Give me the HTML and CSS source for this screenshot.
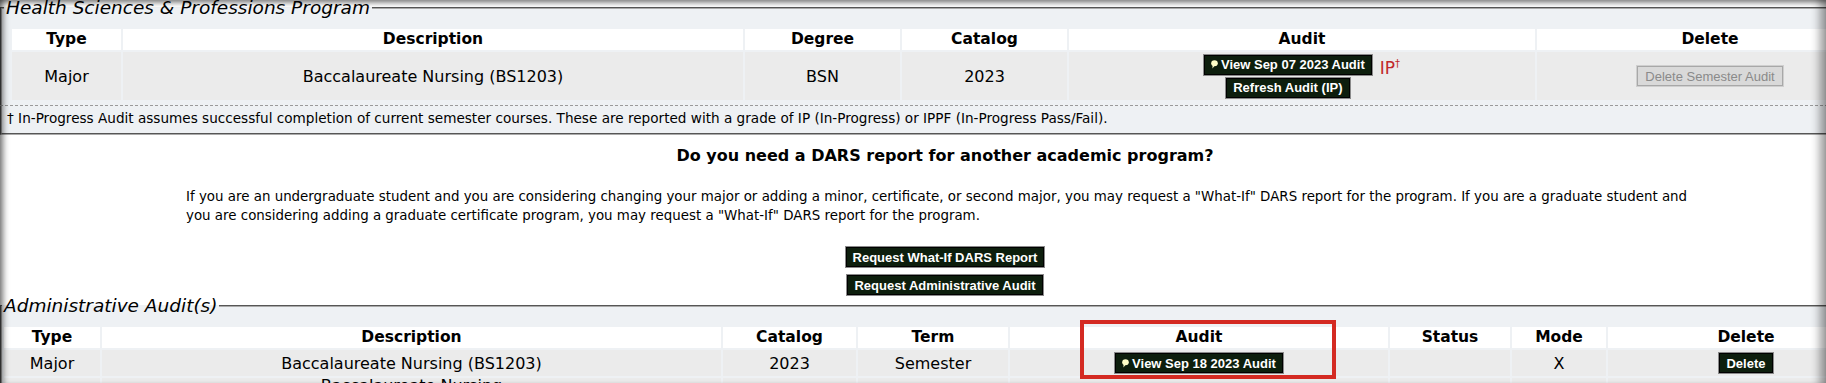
FILE: index.html
```html
<!DOCTYPE html>
<html lang="en">
<head>
    <meta charset="UTF-8">
    <title>Degree Audit</title>
    <link rel="stylesheet" href="styles.css">
</head>
<body>
    <div class="page">
        <fieldset class="group program">
            <legend>Health Sciences &amp; Professions Program</legend>
            <table class="grid grid-program">
                <colgroup>
                    <col class="c-type"><col class="c-desc"><col class="c-degree"><col class="c-catalog"><col class="c-audit"><col class="c-delete">
                </colgroup>
                <thead>
                    <tr><th>Type</th><th>Description</th><th>Degree</th><th>Catalog</th><th>Audit</th><th>Delete</th></tr>
                </thead>
                <tbody>
                    <tr>
                        <td>Major</td>
                        <td>Baccalaureate Nursing (BS1203)</td>
                        <td>BSN</td>
                        <td>2023</td>
                        <td>
                            <div class="audit-links">
                                <div class="audit-buttons">
                                    <button class="btn"><svg class="note" width="7" height="9" viewBox="0 0 7 9"><ellipse cx="3.5" cy="3.2" rx="3.3" ry="3" fill="#ffffc8"/><path d="M1.6 5.2 L1.4 8.6 L3.6 5.8 Z" fill="#ffffc8"/></svg>View Sep 07 2023 Audit</button>
                                    <button class="btn">Refresh Audit (IP)</button>
                                </div>
                                <span class="ip">IP<sup>&dagger;</sup></span>
                            </div>
                        </td>
                        <td><button class="btn btn-disabled" disabled>Delete Semester Audit</button></td>
                    </tr>
                </tbody>
            </table>
            <p class="footnote">&dagger; In-Progress Audit assumes successful completion of current semester courses. These are reported with a grade of IP (In-Progress) or IPPF (In-Progress Pass/Fail).</p>
        </fieldset>

        <div class="whatif">
            <h3>Do you need a DARS report for another academic program?</h3>
            <p>If you are an undergraduate student and you are considering changing your major or adding a minor, certificate, or second major, you may request a "What-If" DARS report for the program. If you are a graduate student and you are considering adding a graduate certificate program, you may request a "What-If" DARS report for the program.</p>
            <div class="actions">
                <button class="btn">Request What-If DARS Report</button>
                <button class="btn">Request Administrative Audit</button>
            </div>
        </div>

        <fieldset class="group admin">
            <legend>Administrative Audit(s)</legend>
            <div class="table-wrap">
                <table class="grid grid-admin">
                    <colgroup>
                        <col class="a-type"><col class="a-desc"><col class="a-catalog"><col class="a-term"><col class="a-audit"><col class="a-status"><col class="a-mode"><col class="a-delete">
                    </colgroup>
                    <thead>
                        <tr><th>Type</th><th>Description</th><th>Catalog</th><th>Term</th><th>Audit</th><th>Status</th><th>Mode</th><th>Delete</th></tr>
                    </thead>
                    <tbody>
                        <tr>
                            <td>Major</td>
                            <td>Baccalaureate Nursing (BS1203)</td>
                            <td>2023</td>
                            <td>Semester</td>
                            <td><button class="btn"><svg class="note" width="7" height="9" viewBox="0 0 7 9"><ellipse cx="3.5" cy="3.2" rx="3.3" ry="3" fill="#ffffc8"/><path d="M1.6 5.2 L1.4 8.6 L3.6 5.8 Z" fill="#ffffc8"/></svg>View Sep 18 2023 Audit</button></td>
                            <td></td>
                            <td>X</td>
                            <td><button class="btn">Delete</button></td>
                        </tr>
                        <tr class="next">
                            <td>Major</td>
                            <td>Baccalaureate Nursing<br>(BS1203)</td>
                            <td>2023</td>
                            <td>Semester</td>
                            <td></td>
                            <td></td>
                            <td>X</td>
                            <td></td>
                        </tr>
                    </tbody>
                </table>
                <div class="highlight"></div>
            </div>
        </fieldset>
    </div>
    <div class="frame"></div>
</body>
</html>
```

FILE: styles.css
```css
html, body {
    margin: 0;
}
body {
    font-family: "DejaVu Sans", Verdana, sans-serif;
    color: #000;
    background: #fff;
    overflow: hidden;
}
.page {
    width: 1890px;
}
.group {
    margin: 0;
    border: 2px groove #aaa;
    background: #eef1f4;
    min-width: 0;
}
.group legend {
    font-style: italic;
    font-size: 18.5px;
    line-height: 22px;
    padding: 0 2px;
}
.program {
    margin-top: -3px;
    padding: 8px 8px 0 8px;
}
.program legend {
    margin-left: -6px;
}
.grid {
    table-layout: fixed;
    border-spacing: 2px;
}
.grid th {
    background: #fff;
    font-size: 15.5px;
    font-weight: bold;
    line-height: 17px;
    padding: 2px 4px;
}
.grid td {
    background: #ebebeb;
    text-align: center;
    font-size: 16px;
    padding: 0 4px;
}
.grid-program {
    width: 1875px;
}
.grid-program td {
    height: 48px;
}
.c-type { width: 109px; }
.c-desc { width: 620px; }
.c-degree { width: 155px; }
.c-catalog { width: 165px; }
.c-audit { width: 466px; }
.c-delete { width: 346px; }

.audit-links {
    display: flex;
    justify-content: center;
    align-items: flex-start;
    gap: 8px;
}
.audit-buttons {
    display: flex;
    flex-direction: column;
    align-items: center;
    gap: 3px;
}
.ip {
    color: #c0282a;
    font-size: 17px;
    line-height: 17px;
}
.ip sup {
    font-size: 10px;
    vertical-align: 7px;
}
.btn {
    font-family: "Liberation Sans", Arial, sans-serif;
    font-size: 13px;
    font-weight: bold;
    color: #fff;
    background: #0d1e0d;
    border: 1px solid #000;
    box-shadow: 0 0 0 1px #8a8a8a;
    height: 20px;
    line-height: 15px;
    padding: 0 6px;
    cursor: pointer;
    display: inline-flex;
    align-items: center;
    gap: 3px;
}
.note {
    display: block;
}
.btn-disabled {
    background: #d9d9d9;
    color: #8a8a8a;
    border: 1px solid #a8a8a8;
    box-shadow: 0 0 0 1px #cfcfcf;
    font-weight: normal;
    padding: 0 7px;
    cursor: default;
}
.footnote {
    margin: 3px -8px 0 -10px;
    padding: 4px 10px 7px 7px;
    border-top: 1px dashed #9a9a9a;
    font-size: 13.6px;
    line-height: 16px;
}

.whatif {
    padding: 11px 0 0;
    text-align: center;
}
.whatif h3 {
    margin: 0;
    font-size: 16px;
    line-height: 20px;
}
.whatif p {
    width: 1518px;
    margin: 22px auto 0;
    text-align: left;
    font-size: 13.4px;
    line-height: 18.5px;
}
.actions {
    display: flex;
    flex-direction: column;
    align-items: center;
    gap: 8px;
    margin-top: 22px;
}

.admin {
    padding: 0;
}
.table-wrap {
    position: relative;
    padding-top: 8px;
}
.grid-admin {
    width: 1884px;
}
.grid-admin td {
    height: 26px;
    padding: 0 4px;
}
.grid-admin .next td {
    line-height: 16px;
    padding-top: 0;
}
.a-type { width: 96px; }
.a-desc { width: 619px; }
.a-catalog { width: 133px; }
.a-term { width: 150px; }
.a-audit { width: 378px; }
.a-status { width: 120px; }
.a-mode { width: 94px; }
.a-delete { width: 276px; }
.highlight {
    position: absolute;
    left: 1078px;
    top: 3px;
    width: 248px;
    height: 51px;
    border: 4px solid #d42a22;
    pointer-events: none;
}

.frame {
    position: fixed;
    inset: 0;
    pointer-events: none;
    box-shadow:
        inset 7px 0 6px -4px rgba(0, 0, 0, 0.55),
        inset -14px 0 10px -8px rgba(0, 0, 0, 0.4),
        inset 0 6px 5px -3px rgba(0, 0, 0, 0.45);
}
```
